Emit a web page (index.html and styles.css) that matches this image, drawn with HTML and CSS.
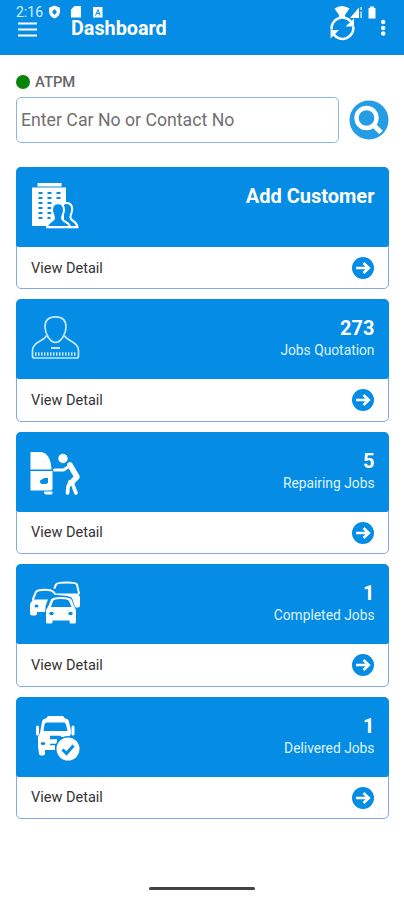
FILE: index.html
```html
<!DOCTYPE html>
<html lang="en">
<head>
    <meta charset="UTF-8">
    <meta name="viewport" content="width=device-width, initial-scale=1.0">
    <title>Dashboard</title>
    <link rel="stylesheet" href="styles.css">
</head>
<body>
    <!-- arrow shared by all the cards -->
    <svg class="defs" width="0" height="0">
        <symbol id="arrow" viewBox="0 0 22 22">
            <circle cx="11" cy="11" r="11" fill="#058ce4"/>
            <path d="M4 11h13M11.500 6l5.300 5-5.300 5" fill="none" stroke="#fff" stroke-width="2.600"/>
        </symbol>
    </svg>

    <header class="topbar">
        <div class="status">
            <span class="time">2:16</span>
            <svg class="status-icons" width="58" height="14" viewBox="0 0 58 14">
                <path fill="#fff" fill-rule="evenodd" d="M6.500 .5l5.500 2.200v4.300q-.5 4.500-5.500 6.500-5-2-5.500-6.500V2.700zM6.500 4L4 7l2.500 3L9 7z"/>
                <path fill="#fff" d="M26.500 1h6.500v11.500H23V4.500z"/>
                <path fill="#fff" d="M45 2h9.500v10.500H45z"/>
                <path d="M47.500 10.500L50 4.500l2 6M48.500 8.500h3.500" fill="none" stroke="#058ce4"/>
            </svg>
        </div>
        <div class="toolbar">
            <svg class="menu" width="19" height="15" viewBox="0 0 19 15">
                <path d="M0 1.500h19M0 7.500h19M0 13.500h19" stroke="#fff" stroke-width="1.800"/>
            </svg>
            <h1>Dashboard</h1>
        </div>
        <svg class="actions" width="60" height="38" viewBox="0 0 60 38">
            <path fill="#fff" d="M4.500 2.500q7.500-5 15 0L15 9v2H9V9zM20 12L29 1.500V12zM30.500 1h1.200v3h-1.200zM30.500 5.500h1.200V12h-1.200zM38.500 2h1.500V.5h4V2h1.500v10.500h-7z"/>
            <path d="M1.700 23.500a10.800 10.800 0 0 1 19.500-7.500M23.200 20.500a10.800 10.800 0 0 1-19.400 8" fill="none" stroke="#fff" stroke-width="2.600"/>
            <path fill="#fff" d="M24 12.500v8h-8.500zM.6 32.500v-8.500H9z"/>
            <circle cx="53.200" cy="16" r="2.200" fill="#fff"/>
            <circle cx="53.200" cy="22" r="2.200" fill="#fff"/>
            <circle cx="53.200" cy="27.500" r="2.200" fill="#fff"/>
        </svg>
    </header>

    <main>
        <div class="user"><span class="dot"></span>ATPM</div>
        <form class="search">
            <input type="text" placeholder="Enter Car No or Contact No">
            <button type="button" aria-label="Search">
                <svg width="40" height="40" viewBox="0 0 40 40">
                    <circle cx="20" cy="20" r="19.500" fill="#249de4"/>
                    <circle cx="17.500" cy="18" r="10" fill="none" stroke="#fff" stroke-width="4.400"/>
                    <path d="M24.500 25l7.500 7.500" stroke="#fff" stroke-width="5"/>
                </svg>
            </button>
        </form>

        <section class="card">
            <div class="card-top">
                <svg class="icon" viewBox="0 0 52 52">
                    <path fill="#fff" d="M8.500 3h24v3.500h-24zM3 7.500h34V46H3z"/>
                    <path d="M9.500 13h4m5 0h4m5 0h4M9.500 18h4m5 0h4m5 0h4M9.500 23h4m5 0h4M9.500 28h4m5 0h4M9.500 33h4m5 0h4M9.500 38h4m5 0h3" stroke="#058ce4" stroke-width="1.800"/>
                    <path d="M34 24c6-3 10 1 9 7-.5 4-3 5-1 8 1 2 6 3 6.500 8H34z" fill="#058ce4" stroke="#fff" stroke-width="2"/>
                    <path d="M18 47c.5-6 7-5 7-9 0-3-2-4-2-8 0-9 12-9 12 0 0 4-2 5-2 8 0 4 7 3 8 9z" fill="#058ce4" stroke="#fff" stroke-width="2"/>
                    <path d="M17 47.300h32" stroke="#fff" stroke-width="2"/>
                </svg>
                <div class="info"><strong>Add Customer</strong></div>
            </div>
            <div class="card-bottom">View Detail <svg class="arrow"><use href="#arrow"/></svg></div>
        </section>

        <section class="card">
            <div class="card-top">
                <svg class="icon" viewBox="0 0 52 52">
                    <g fill="none" stroke="#c4e8ff" stroke-width="1.700">
                        <path d="M26.500 4.800c7 0 10.500 4 10.500 10 0 7-5 15.500-10.500 15.500S16 21.800 16 14.800c0-6 3.500-10 10.500-10z"/>
                        <path d="M17.500 23.500c-1 5-14 6-14 15V44q0 2 2 2h42q2 0 2-2v-5.500c0-9-13-10-14-15"/>
                        <path d="M22 36h9" stroke-width="2"/>
                        <path d="M6 42h41" stroke-width="3.500" stroke-dasharray="1.500 1.500"/>
                    </g>
                </svg>
                <div class="info"><strong>273</strong><span>Jobs Quotation</span></div>
            </div>
            <div class="card-bottom">View Detail <svg class="arrow"><use href="#arrow"/></svg></div>
        </section>

        <section class="card">
            <div class="card-top">
                <svg class="icon" viewBox="0 0 52 52">
                    <path fill="#fff" d="M1.500 7h9C18 7 22 13 22.500 24.500h-21zM1.500 26h22v17.500q0 2-2 2h-20zM15 46.500h8.500V48q0 1.500-1.500 1.500h-5q-2 0-2-3z"/>
                    <path fill="#058ce4" d="M11 36q0-1.500 2-1.500l2-1.500h4v5l-2 1h-4q-2 0-2-3z"/>
                    <circle cx="34" cy="13.500" r="4.700" fill="#fff"/>
                    <g fill="none" stroke="#fff" stroke-linecap="round" stroke-linejoin="round">
                        <path d="M25.500 25h9l6-4" stroke-width="3"/>
                        <path d="M41 20l7 12-6 6" stroke-width="5.500"/>
                        <path d="M41 37l-2 5-.5 6M43 37l2 6 2 5" stroke-width="3.700"/>
                    </g>
                </svg>
                <div class="info"><strong>5</strong><span>Repairing Jobs</span></div>
            </div>
            <div class="card-bottom">View Detail <svg class="arrow"><use href="#arrow"/></svg></div>
        </section>

        <section class="card">
            <div class="card-top">
                <svg class="icon" viewBox="0 0 52 52">
                    <!-- rear car -->
                    <path fill="none" stroke="#fff" stroke-width="2" stroke-linecap="round" d="M25.500 11l1.500-3.500q1-2 10.500-2t10.500 2l2 9"/>
                    <path fill="#fff" d="M25 16.500h24l2 3.500v8.500q0 2-2 2h-3.500L43 21q-2-2.500-15-3z"/>
                    <!-- left car -->
                    <path fill="none" stroke="#fff" stroke-width="2" stroke-linecap="round" d="M4 22l3-7q1-2.200 9-2.200 6 0 8.500 2.200l1.500 2"/>
                    <path fill="#fff" d="M4 22.500h15L16.500 29v6H8v1.500q0 2-2 2H3q-2 0-2-2V27z"/>
                    <ellipse cx="7.500" cy="29" rx="2" ry="1.500" fill="#058ce4"/>
                    <!-- front car -->
                    <path fill="#fff" fill-rule="evenodd" stroke="#058ce4" stroke-width="1.400" paint-order="stroke" d="M19.500 29l2.500-6.500q1-2.500 10-2.500t10.500 2.500L45 29l2 4v12q0 1.500-1.500 1.500h-3.500q-1.500 0-1.500-1.500v-1.500h-17V45q0 1.500-1.500 1.500h-3.500Q17 46.500 17 45V33zM22 30h20.500l-2.500-6q-1-2-8-2t-8 2z"/>
                    <ellipse cx="22.500" cy="36.500" rx="2.200" ry="1.700" fill="#058ce4"/>
                    <ellipse cx="41.500" cy="36.500" rx="2.200" ry="1.700" fill="#058ce4"/>
                </svg>
                <div class="info"><strong>1</strong><span>Completed Jobs</span></div>
            </div>
            <div class="card-bottom">View Detail <svg class="arrow"><use href="#arrow"/></svg></div>
        </section>

        <section class="card">
            <div class="card-top">
                <svg class="icon" viewBox="0 0 52 52">
                    <path fill="#fff" fill-rule="evenodd" d="M17 8.500L19 6h15l2 2.500q3 0 4 3l2 9.500v3l-2 3H28v8h-2v5H16v3.500q0 2-2 2h-2q-2 0-2-2l-1-7V27l2-4 2-11.500q1-3 4-3zM18 12.500q-2 0-2.500 2L14.500 21h24l-1.500-6.500q-.5-2-2.500-2z"/>
                    <path d="M21 27.500h11" stroke="#058ce4" stroke-width="3.500"/>
                    <path d="M21 34.500h6" stroke="#058ce4" stroke-width="1.500"/>
                    <path d="M8.500 17v7M44 17v7" stroke="#fff" stroke-width="3" stroke-linecap="round"/>
                    <ellipse cx="14" cy="33.500" rx="2.200" ry="1.600" fill="#058ce4"/>
                    <circle cx="39" cy="39" r="13" fill="#058ce4"/>
                    <circle cx="39" cy="39" r="11.500" fill="#fff"/>
                    <path d="M33.500 39.500l4 4 7-8" fill="none" stroke="#058ce4" stroke-width="3"/>
                </svg>
                <div class="info"><strong>1</strong><span>Delivered Jobs</span></div>
            </div>
            <div class="card-bottom">View Detail <svg class="arrow"><use href="#arrow"/></svg></div>
        </section>
    </main>

    <footer><div class="home-bar"></div></footer>
</body>
</html>
```

FILE: styles.css
```css
* {
    box-sizing: border-box;
}
body {
    margin: 0;
    height: 900px;
    display: flex;
    flex-direction: column;
    background-color: #fff;
    font-family: Roboto, sans-serif;
    color: #333;
    overflow: hidden;
}
.defs {
    position: absolute;
}
.topbar {
    position: relative;
    height: 55px;
    flex-shrink: 0;
    background-color: #058ce4;
    color: #fff;
    padding: 5px 16px 0;
}
.status {
    display: flex;
    align-items: center;
    height: 14px;
}
.time {
    width: 32px;
    font-size: 14px;
    line-height: 14px;
    color: #d5efff;
}
.toolbar {
    display: flex;
    align-items: center;
    height: 20px;
    padding-left: 2px;
}
.toolbar h1 {
    margin: 0 0 0 34px;
    font-size: 19.800px;
    line-height: 20px;
    font-weight: 700;
}
/* the action icons run up into the status line */
.actions {
    position: absolute;
    top: 6px;
    right: 14px;
}
main {
    padding: 18px 15px 0 16px;
}
.user {
    display: flex;
    align-items: center;
    gap: 5px;
    height: 18px;
    font-size: 14.800px;
    font-weight: 500;
    color: #666;
}
.dot {
    width: 14px;
    height: 14px;
    border-radius: 50%;
    background-color: #078407;
}
.search {
    display: flex;
    align-items: center;
    gap: 10px;
    margin: 6px 0 24px;
}
.search input {
    width: 324px;
    height: 46px;
    padding: 0 4px;
    border: 1.500px solid #8fb4ea;
    border-radius: 5px;
    font-family: inherit;
    font-size: 17.700px;
}
.search input::placeholder {
    color: #707070;
}
.search button {
    padding: 0;
    border: none;
    background: none;
    height: 40px;
}
.card {
    height: 122.400px;
    margin-bottom: 10px;
    border: 1px solid #82a9e6;
    border-radius: 5px;
}
.card-top {
    display: flex;
    justify-content: space-between;
    height: 80px;
    margin: -1px -1px 0;
    padding: 13px 14.500px 0 13px;
    border-radius: 5px 5px 3px 3px;
    background-color: #058ce4;
    color: #fff;
}
.icon {
    width: 52px;
    height: 52px;
}
.info {
    display: flex;
    flex-direction: column;
    align-items: flex-end;
    padding-top: 4px;
}
.info strong {
    font-size: 20px;
    line-height: 24px;
}
.info span {
    font-size: 13.800px;
    line-height: 21px;
    color: #dff3ff;
}
.card-bottom {
    display: flex;
    align-items: center;
    justify-content: space-between;
    height: 42px;
    padding: 0 14px 0 14px;
    font-size: 14.500px;
}
.arrow {
    width: 22px;
    height: 22px;
}
footer {
    margin-top: auto;
    height: 13px;
    display: flex;
    justify-content: center;
}
.home-bar {
    width: 106px;
    height: 3px;
    border-radius: 2px;
    background-color: #444;
}
```
